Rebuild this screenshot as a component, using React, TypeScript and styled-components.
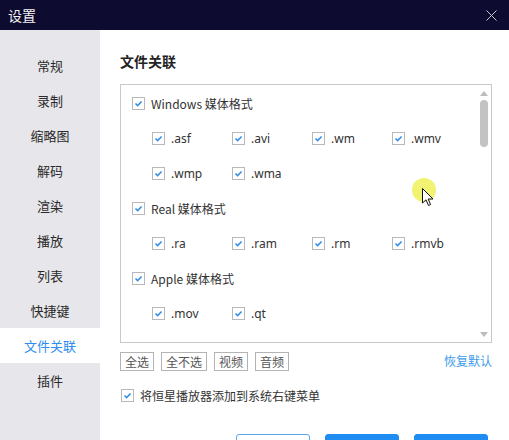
import * as React from "react";
import styled, { createGlobalStyle } from "styled-components";

const GlobalStyle = createGlobalStyle`
  html, body { margin: 0; padding: 0; background: #ffffff; }
  body { font-family: "Noto Sans CJK SC", "Noto Sans", sans-serif; color: #333; }
`;

const Window = styled.div`
  position: relative;
  width: 509px;
  height: 440px;
  overflow: hidden;
  display: flex;
  flex-direction: column;
  background: #fff;
`;

const TitleBar = styled.div`
  height: 30px;
  flex: none;
  background: #0d0b2f;
  color: #f2f2f2;
  display: flex;
  align-items: center;
  justify-content: space-between;
  padding: 0 12px 0 8px;
  font-size: 14px;
`;

const Body = styled.div`
  flex: 1;
  display: flex;
  min-height: 0;
`;

const Sidebar = styled.nav`
  width: 100px;
  flex: none;
  background: #e7e6eb;
  padding-top: 18px;
  display: flex;
  flex-direction: column;
`;

const NavItem = styled.div<{ $active?: boolean }>`
  height: 35px;
  display: flex;
  align-items: center;
  justify-content: center;
  font-size: 13px;
  color: ${p => (p.$active ? "#2d8cf0" : "#2a2a2a")};
  background: ${p => (p.$active ? "#ffffff" : "transparent")};
`;

const Content = styled.main`
  flex: 1;
  padding: 0 17px 0 20px;
  display: flex;
  flex-direction: column;
`;

const SectionTitle = styled.h2`
  margin: 21px 0 13px;
  font-size: 14px;
  line-height: 20px;
  font-weight: bold;
  color: #222;
`;

const ListBox = styled.div`
  position: relative;
  height: 259px;
  flex: none;
  border: 1px solid #c9c9c9;
  box-sizing: border-box;
  overflow: hidden;
  padding: 1px 0 0 11px;
`;

const GroupRow = styled.div`
  height: 35px;
  display: flex;
  align-items: center;
  gap: 6px;
  font-size: 12px;
  color: #333;
`;

const SubGrid = styled.div`
  display: grid;
  grid-template-columns: repeat(4, 80px);
  padding-left: 20px;
`;

const SubItem = styled.div`
  height: 35px;
  display: flex;
  align-items: center;
  gap: 6px;
  font-size: 12px;
  color: #333;
  font-family: "Noto Sans", "Noto Sans CJK SC", sans-serif;
`;

const Box = styled.span`
  width: 13px;
  height: 13px;
  box-sizing: border-box;
  border: 1px solid #b9b9b9;
  background: #fff;
  display: inline-flex;
  align-items: center;
  justify-content: center;
  flex: none;
`;

const ScrollTrack = styled.div`
  position: absolute;
  top: 0;
  right: 0;
  bottom: 0;
  width: 14px;
  display: flex;
  flex-direction: column;
  align-items: center;
  padding: 6px 0 5px;
  box-sizing: border-box;
`;

const Thumb = styled.div`
  width: 8px;
  height: 47px;
  margin-top: 4px;
  border-radius: 4px;
  background: #c3c3c3;
`;

const Arrow = styled.div<{ $down?: boolean }>`
  width: 0;
  height: 0;
  border-left: 4px solid transparent;
  border-right: 4px solid transparent;
  ${p =>
    p.$down
      ? "border-top: 5px solid #bdbdbd; margin-top: auto;"
      : "border-bottom: 5px solid #bdbdbd;"}
`;

const ToolRow = styled.div`
  margin-top: 9px;
  height: 19px;
  display: flex;
  align-items: center;
  gap: 7px;
`;

const SmallButton = styled.button`
  height: 19px;
  padding: 0 4px;
  box-sizing: border-box;
  display: inline-flex;
  align-items: center;
  border: 1px solid #b4b4b4;
  background: #fff;
  color: #555;
  font-size: 12px;
  font-family: "Noto Sans CJK SC", sans-serif;
  line-height: 15px;
  border-radius: 0;
`;

const LinkText = styled.span`
  margin-left: auto;
  color: #3d9be9;
  font-size: 12px;
  line-height: 15px;
  margin-bottom: 2px;
`;

const OptionRow = styled.div`
  margin-top: 16px;
  height: 16px;
  display: flex;
  align-items: center;
  gap: 6px;
  padding-left: 1px;
  font-size: 12px;
  color: #333;
`;

const Footer = styled.div`
  margin-top: 31px;
  display: flex;
  justify-content: flex-end;
  gap: 15px;
  padding-right: 4px;
`;

const FooterButton = styled.button<{ $primary?: boolean }>`
  width: 74px;
  height: 28px;
  flex: none;
  border-radius: 3px;
  border: 1px solid ${p => (p.$primary ? "#1e8cf0" : "#5aa8f0")};
  background: ${p => (p.$primary ? "#1e8cf0" : "#fff")};
`;

const Highlight = styled.div`
  position: absolute;
  left: 412px;
  top: 178px;
  width: 24px;
  height: 24px;
  border-radius: 50%;
  background: rgba(240, 240, 90, 0.85);
`;

const Cursor = styled.svg`
  position: absolute;
  left: 422px;
  top: 188px;
`;

const Check = () => (
  <Box>
    <svg width="11" height="11" viewBox="0 0 11 11">
      <path d="M2.5 5.5 L4.6 7.6 L8.6 3.4" fill="none" stroke="#2f8de4" strokeWidth="1.5" />
    </svg>
  </Box>
);

const navItems = ["常规", "录制", "缩略图", "解码", "渲染", "播放", "列表", "快捷键", "文件关联", "插件"];

const groups = [
  { name: "Windows 媒体格式", exts: [".asf", ".avi", ".wm", ".wmv", ".wmp", ".wma"] },
  { name: "Real 媒体格式", exts: [".ra", ".ram", ".rm", ".rmvb"] },
  { name: "Apple 媒体格式", exts: [".mov", ".qt"] },
  // next group only peeks in at the bottom edge of the list
  { name: "", exts: [] as string[] },
];

export default function App() {
  return (
    <>
      <GlobalStyle />
      <Window>
        <TitleBar>
          <span>设置</span>
          <svg width="11" height="11" viewBox="0 0 11 11">
            <path d="M0.5 0.5 L10.5 10.5 M10.5 0.5 L0.5 10.5" stroke="#c8c8d0" strokeWidth="1" />
          </svg>
        </TitleBar>
        <Body>
          <Sidebar>
            {navItems.map(n => (
              <NavItem key={n} $active={n === "文件关联"}>
                {n}
              </NavItem>
            ))}
          </Sidebar>
          <Content>
            <SectionTitle>文件关联</SectionTitle>
            <ListBox>
              {groups.map((g, i) => (
                <div key={i}>
                  <GroupRow>
                    <Check />
                    {g.name}
                  </GroupRow>
                  {g.exts.length > 0 && (
                    <SubGrid>
                      {g.exts.map(e => (
                        <SubItem key={e}>
                          <Check />
                          {e}
                        </SubItem>
                      ))}
                    </SubGrid>
                  )}
                </div>
              ))}
              <ScrollTrack>
                <Arrow />
                <Thumb />
                <Arrow $down />
              </ScrollTrack>
            </ListBox>
            <ToolRow>
              <SmallButton>全选</SmallButton>
              <SmallButton>全不选</SmallButton>
              <SmallButton>视频</SmallButton>
              <SmallButton>音频</SmallButton>
              <LinkText>恢复默认</LinkText>
            </ToolRow>
            <OptionRow>
              <Check />
              将恒星播放器添加到系统右键菜单
            </OptionRow>
            <Footer>
              <FooterButton />
              <FooterButton $primary />
              <FooterButton $primary />
            </Footer>
          </Content>
        </Body>
        <Highlight />
        <Cursor width="12" height="19" viewBox="0 0 12 19">
          <path d="M0.5 0.5 L0.5 15 L4 11.8 L6.5 17.5 L8.6 16.6 L6.2 11 L11 11 Z" fill="#fff" stroke="#111" strokeWidth="1" />
        </Cursor>
      </Window>
    </>
  );
}
